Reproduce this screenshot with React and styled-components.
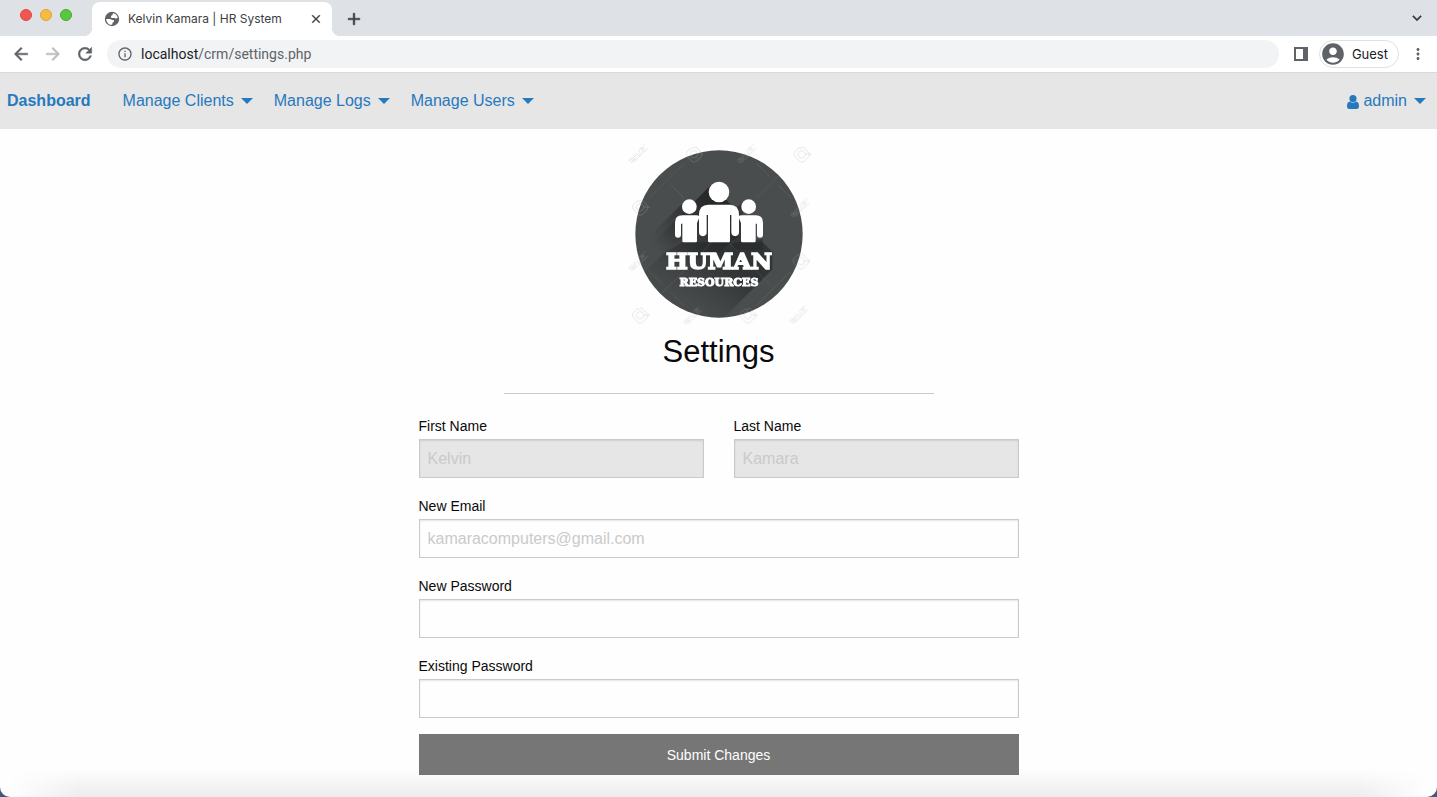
import React from 'react';
import styled, { createGlobalStyle } from 'styled-components';
import {
  MdInfoOutline, MdArrowBack, MdArrowForward, MdRefresh,
  MdAccountCircle, MdMoreVert, MdClose, MdAdd, MdExpandMore,
} from 'react-icons/md';

const GlobalStyle = createGlobalStyle`
  *, *::before, *::after { box-sizing: border-box; }
  body {
    margin: 0;
    background: #41597a;
    font-family: "Liberation Sans", Helvetica, Arial, sans-serif;
  }
  button, input { font: inherit; }
  button { border: 0; padding: 0; background: none; cursor: pointer; }
`;

const Window = styled.div`
  position: relative;
  min-height: 100vh;
  display: flex;
  flex-direction: column;
  overflow: hidden;
  border-radius: 0 0 10px 10px;
  background: #fefefe;
`;

const DesktopShade = styled.div`
  position: absolute;
  left: 0;
  right: 0;
  bottom: 0;
  height: 28px;
  pointer-events: none;
  background: linear-gradient(to bottom, rgba(0, 0, 0, 0), rgba(0, 0, 0, 0.07));
  mask-image: linear-gradient(to right, transparent 8px, #000 80px, #000 calc(100% - 80px), transparent calc(100% - 8px));
`;

/* Browser chrome */

const TabStrip = styled.div`
  display: flex;
  height: 36px;
  padding: 0 11px 0 20px;
  background: #dee1e6;
  font-family: Inter, sans-serif;
`;

const WindowControls = styled.div`
  display: flex;
  gap: 8px;
  padding-top: 9px;
  margin-right: 20px;
`;

const ControlDot = styled.button`
  width: 12px;
  height: 12px;
  border-radius: 50%;
  border: 1px solid ${(p) => p.$edge};
  background: ${(p) => p.$fill};
`;

const Tab = styled.div`
  position: relative;
  display: flex;
  align-items: center;
  width: 240px;
  margin-top: 2px;
  padding: 0 9px 0 12px;
  border-radius: 8px 8px 0 0;
  background: #fff;
  color: #3c4043;
  font-size: 12px;

  svg { display: block; }

  &::before, &::after {
    content: "";
    position: absolute;
    bottom: 0;
    width: 8px;
    height: 8px;
  }
  &::before {
    left: -8px;
    background: radial-gradient(circle at 0 0, transparent 8px, #fff 8px);
  }
  &::after {
    right: -8px;
    background: radial-gradient(circle at 100% 0, transparent 8px, #fff 8px);
  }
`;

const TabTitle = styled.span`
  flex: 1;
  margin-left: 8px;
  padding-bottom: 2px;
  white-space: nowrap;
`;

const IconButton = styled.button`
  display: flex;
  align-items: center;
  justify-content: center;
  flex: none;
  color: ${(p) => p.$color || '#5f6368'};

  svg { stroke-width: 0; }
  path:not([fill="none"]) { stroke-width: ${(p) => (p.$heavy ? 0.6 : 0)}; }
`;

const NewTab = styled(IconButton)`
  margin: 2px auto 0 12px;
`;

const Toolbar = styled.div`
  display: flex;
  align-items: center;
  height: 37px;
  padding: 0 10px 0 11px;
  border-bottom: 1px solid #d8d9da;
  background: #fff;
  color: #5f6368;
`;

const HistoryButtons = styled.div`
  display: flex;
  gap: 12px;
  margin-right: 12px;
`;

const AddressBar = styled.div`
  flex: 1;
  display: flex;
  align-items: center;
  height: 28px;
  padding: 0 10px;
  border-radius: 14px;
  background: #f1f3f4;
  font-family: Roboto, sans-serif;
  font-size: 14px;
`;

const Address = styled.span`
  margin-left: 8px;
  color: #5f6368;
`;

const Host = styled.span`
  color: #202124;
`;

const ToolbarActions = styled.div`
  display: flex;
  align-items: center;
  margin-left: 14px;
`;

const Profile = styled.button`
  display: flex;
  align-items: center;
  gap: 6px;
  height: 28px;
  margin: 0 10px;
  padding: 0 10px 0 0;
  border: 1px solid #dfe1e5;
  border-radius: 14px;
  color: #202124;
  font-family: Inter, sans-serif;
  font-size: 13px;

  svg { color: #5f6368; }
`;

/* Site navigation */

const NavBar = styled.nav`
  display: flex;
  align-items: center;
  height: 56px;
  padding: 0 11px 0 7px;
  background: #e6e6e6;
  font-size: 16px;
`;

const NavLink = styled.a`
  display: flex;
  align-items: center;
  color: #2779bd;
  text-decoration: none;
  white-space: nowrap;
  font-weight: ${(p) => (p.$strong ? 700 : 400)};
`;

const Menu = styled.div`
  display: flex;
  gap: 21px;
  margin: 0 auto 0 32px;
`;

const Caret = styled.span`
  width: 12px;
  margin-left: 7px;
  border: 6px solid transparent;
  border-top-color: currentColor;
  border-bottom: 0;
`;

const UserGlyph = styled.svg`
  width: 12px;
  height: 14px;
  margin: 2px 4px 0 0;
  fill: currentColor;
`;

/* Settings page */

const Main = styled.main`
  display: flex;
  flex-direction: column;
  align-items: center;
  padding: 6px 16px 22px;
`;

const Logo = styled.svg`
  width: 200px;
  height: 200px;
`;

const Title = styled.h1`
  margin: 0;
  font-size: 31px;
  font-weight: 400;
  line-height: 34px;
  color: #0a0a0a;
`;

const Rule = styled.hr`
  width: 100%;
  max-width: 430px;
  height: 1px;
  margin: 24px 0 20px;
  border: 0;
  background: #cacaca;
`;

const Form = styled.form`
  display: grid;
  grid-template-columns: 1fr 1fr;
  gap: 16px 30px;
  width: 100%;
  max-width: 600px;
`;

const Field = styled.div`
  grid-column: ${(p) => (p.$half ? 'auto' : '1 / -1')};
`;

const Label = styled.label`
  display: block;
  font-size: 14px;
  line-height: 25px;
  color: #0a0a0a;
`;

const Input = styled.input`
  display: block;
  width: 100%;
  height: 39px;
  padding: 8px;
  border: 1px solid #cacaca;
  border-radius: 0;
  background: #fefefe;
  box-shadow: inset 0 1px 2px rgba(10, 10, 10, 0.1);
  color: #0a0a0a;
  font-size: 16px;

  &::placeholder { color: #cacaca; opacity: 1; }
  &:disabled { background: #e6e6e6; }
`;

const Submit = styled.button`
  grid-column: 1 / -1;
  height: 41px;
  background: #767676;
  color: #fefefe;
  font-size: 14px;
`;

const menus = ['Manage Clients', 'Manage Logs', 'Manage Users'];

const fields = [
  { id: 'first-name', label: 'First Name', placeholder: 'Kelvin', half: true, disabled: true },
  { id: 'last-name', label: 'Last Name', placeholder: 'Kamara', half: true, disabled: true },
  { id: 'email', label: 'New Email', placeholder: 'kamaracomputers@gmail.com', type: 'email' },
  { id: 'new-password', label: 'New Password', type: 'password' },
  { id: 'existing-password', label: 'Existing Password', type: 'password' },
];

const cameraMarks = [[220, 57], [543, 57], [58, 216], [540, 378], [58, 540], [381, 540]];
const scriptMarks = [[55, 55], [380, 55], [540, 218], [55, 378], [218, 540], [537, 537]];
const crosses = [[140, 137], [461, 137], [140, 460], [461, 460], [300, 297]];

function SidePerson() {
  return (
    <>
      <circle cx="208" cy="215" r="22" />
      <path d="M187 241H229Q236 241 239 245L231 264V318q0 4-4 4H191q-4 0-4-4V266h-4V299a9 9 0 0 1-18 0V263Q165 241 187 241Z" />
    </>
  );
}

function Globe() {
  return (
    <svg width="16" height="16" viewBox="0 0 16 16" aria-hidden="true">
      <circle cx="8" cy="8" r="7.2" fill="#5f6368" />
      <path
        fill="#fff"
        d="M9.200 2.300C11.500 2.500 13.300 4.300 13.700 6.800c-.7.900-1.900 1-2.500.5-.6-.7-1.500-.3-2.500-.3-1.300 0-2.200-.8-1.700-1.800.3-.7 1.200-.5 1.500-1.100.2-.6 0-1.200.7-1.800zM2.200 7.900h3.500c1.500 0 1.800 1.200 3.300 1.200 1.400.1 1.500 1.500.4 2-.9.4-.9 1.400-1.300 2.700C4.800 14 2.300 11.300 2.200 7.900z"
      />
    </svg>
  );
}

function HumanResourcesLogo() {
  return (
    <Logo viewBox="-3 0 600 600" role="img" aria-label="Human Resources">
      <defs>
        <clipPath id="disc"><circle cx="297" cy="297" r="251" /></clipPath>
        <linearGradient id="cast" gradientUnits="userSpaceOnUse" x1="300" y1="240" x2="150" y2="390">
          <stop offset="0" stopColor="#1c1e1e" stopOpacity="0.75" />
          <stop offset="0.5" stopColor="#222525" stopOpacity="0.4" />
          <stop offset="1" stopColor="#2d3030" stopOpacity="0" />
        </linearGradient>
        <linearGradient id="castSide" gradientUnits="userSpaceOnUse" x1="190" y1="240" x2="100" y2="330">
          <stop offset="0" stopColor="#1c1e1e" stopOpacity="0.45" />
          <stop offset="1" stopColor="#2d3030" stopOpacity="0" />
        </linearGradient>
        <linearGradient id="castLow" gradientUnits="userSpaceOnUse" x1="320" y1="390" x2="230" y2="520">
          <stop offset="0" stopColor="#242727" stopOpacity="0.65" />
          <stop offset="1" stopColor="#303333" stopOpacity="0.1" />
        </linearGradient>
      </defs>
      <circle cx="297" cy="297" r="251" fill="#4a4d4e" />
      <g clipPath="url(#disc)">
        <path d="M275 148L60 363V480L136 404L300 350L357 302V235Z" fill="url(#cast)" />
        <path d="M370 199L340 229V345L428 345V312L363 320Z" fill="#242727" opacity="0.55" />
        <path d="M192 200L50 342V430L187 310Z" fill="url(#castSide)" />
        <path d="M136 350L60 426L180 600H260L457 403V350L428 322H187Z" fill="url(#castLow)" />
        <g stroke="#999" strokeWidth="1.500" opacity="0.35" fill="none">
          {crosses.map(([x, y]) => (
            <path key={`${x}-${y}`} d={`M${x - 52} ${y - 52}L${x - 12} ${y - 12}M${x + 12} ${y + 12}L${x + 52} ${y + 52}M${x - 52} ${y + 52}L${x + 52} ${y - 52}`} />
          ))}
        </g>
      </g>
      <g stroke="#b0b0b0" strokeWidth="2.500" opacity="0.35" fill="none">
        {cameraMarks.map(([x, y]) => (
          <g key={`${x}-${y}`} transform={`translate(${x} ${y}) rotate(-45)`}>
            <path d="M-18-10l8-8H8l5 6 7 2V16l-6 6h-26l-6-6z" />
            <circle cx="1" cy="2" r="11" />
            <path d="M10 10l12 12" />
          </g>
        ))}
        {scriptMarks.map(([x, y]) => (
          <path
            key={`${x}-${y}`}
            transform={`translate(${x} ${y}) rotate(-45)`}
            d="M-34-5v10h6v-10zM-24-7v12h5v-7h-5M-14 5v-10h6M-14 0h5M-4-6v11h6M7-6L4 5M9-6h8l-4 12M20-6v12M20-6h7M20 0h6M31-5h4M-30 9H30"
          />
        ))}
      </g>
      <g fill="#fff">
        <SidePerson />
        <g transform="translate(594 0) scale(-1 1)"><SidePerson /></g>
        <circle cx="297" cy="171" r="31" />
        <path d="M265 209H329Q357 209 357 240V292a11 11 0 0 1-23 0V240h-4V318q0 4-4 4H268q-4 0-4-4V240h-4V292a11 11 0 0 1-23 0V240Q237 209 265 209Z" />
      </g>
      <g
        fill="#fff"
        stroke="#fff"
        textAnchor="middle"
        fontFamily="DejaVu Serif, serif"
        fontWeight="700"
      >
        <text x="297" y="402" fontSize="69" strokeWidth="5">HUMAN</text>
        <text x="297" y="453" fontSize="33" strokeWidth="3">RESOURCES</text>
      </g>
    </Logo>
  );
}

function BrowserChrome() {
  return (
    <header>
      <TabStrip>
        <WindowControls>
          <ControlDot aria-label="Close window" $fill="#f1574f" $edge="#dc4840" />
          <ControlDot aria-label="Minimize window" $fill="#f6bc42" $edge="#dea236" />
          <ControlDot aria-label="Zoom window" $fill="#5ac83e" $edge="#47a92f" />
        </WindowControls>
        <Tab>
          <Globe />
          <TabTitle>Kelvin Kamara | HR System</TabTitle>
          <IconButton aria-label="Close tab" $color="#3c4043" $heavy><MdClose size={14} /></IconButton>
        </Tab>
        <NewTab aria-label="New tab" $color="#3c4043" $heavy><MdAdd size={20} /></NewTab>
        <IconButton aria-label="Search tabs" $color="#3c4043" $heavy><MdExpandMore size={18} /></IconButton>
      </TabStrip>
      <Toolbar>
        <HistoryButtons>
          <IconButton aria-label="Back" $heavy><MdArrowBack size={20} /></IconButton>
          <IconButton aria-label="Forward" $color="#babcbe" $heavy><MdArrowForward size={20} /></IconButton>
          <IconButton aria-label="Reload" $heavy><MdRefresh size={20} /></IconButton>
        </HistoryButtons>
        <AddressBar>
          <MdInfoOutline size={16} />
          <Address><Host>localhost</Host>/crm/settings.php</Address>
        </AddressBar>
        <ToolbarActions>
          <IconButton aria-label="Side panel">
            <svg width="16" height="16" viewBox="0 0 16 16">
              <path fill="currentColor" fillRule="evenodd" d="M1 1h14v14H1zM3 3v10h7V3z" />
            </svg>
          </IconButton>
          <Profile><MdAccountCircle size={26} />Guest</Profile>
          <IconButton aria-label="Browser menu"><MdMoreVert size={18} /></IconButton>
        </ToolbarActions>
      </Toolbar>
    </header>
  );
}

export default function App() {
  return (
    <>
      <GlobalStyle />
      <Window>
        <BrowserChrome />
        <NavBar>
          <NavLink href="#dashboard" $strong>Dashboard</NavLink>
          <Menu>
            {menus.map((name) => (
              <NavLink href="#menu" key={name}>{name}<Caret /></NavLink>
            ))}
          </Menu>
          <NavLink href="#account">
            <UserGlyph viewBox="0 0 12 14" aria-hidden="true">
              <path d="M6 0a3.500 3.500 0 0 1 0 7.200A3.500 3.500 0 0 1 6 0zM3 6.400C3.800 7.200 4.800 7.700 6 7.700s2.200-.5 3-1.300c2.300.2 3 2.300 3 5.100 0 1.400-.9 2.500-2.300 2.500H2.300C.9 14 0 12.900 0 11.500 0 8.700.7 6.600 3 6.400z" />
            </UserGlyph>
            admin
            <Caret />
          </NavLink>
        </NavBar>
        <Main>
          <HumanResourcesLogo />
          <Title>Settings</Title>
          <Rule />
          <Form onSubmit={(event) => event.preventDefault()}>
            {fields.map(({ id, label, half, type = 'text', placeholder, disabled }) => (
              <Field key={id} $half={half}>
                <Label htmlFor={id}>{label}</Label>
                <Input id={id} type={type} placeholder={placeholder} disabled={disabled} />
              </Field>
            ))}
            <Submit type="submit">Submit Changes</Submit>
          </Form>
        </Main>
        <DesktopShade />
      </Window>
    </>
  );
}
